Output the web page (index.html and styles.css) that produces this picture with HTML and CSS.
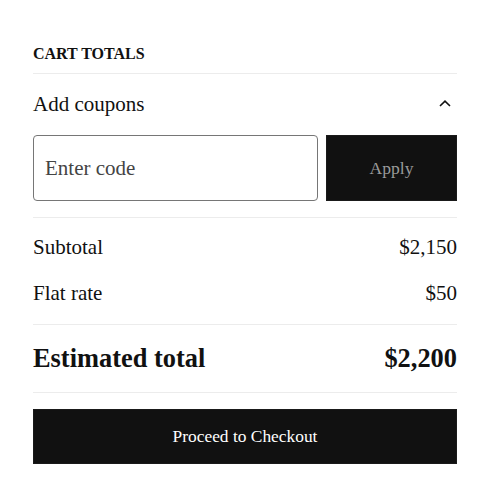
FILE: index.html
```html
<!DOCTYPE html>
<html lang="en">
<head>
<meta charset="utf-8">
<title>Cart totals</title>
<link rel="stylesheet" href="styles.css">
</head>
<body>
<div class="cart">
  <h2 class="cart-title">CART TOTALS</h2>
  <div class="coupons">
    <div class="coupons-head">
      <span>Add coupons</span>
      <svg class="chevron" width="12" height="7" viewBox="0 0 12 7" aria-hidden="true"><polyline points="1,6 6,1.2 11,6" fill="none" stroke="#111" stroke-width="1.6"/></svg>
    </div>
    <div class="coupon-form">
      <input class="coupon-input" type="text" placeholder="Enter code">
      <button class="apply-btn" type="button">Apply</button>
    </div>
  </div>
  <div class="lines">
    <div class="line"><span>Subtotal</span><span>$2,150</span></div>
    <div class="line"><span>Flat rate</span><span>$50</span></div>
  </div>
  <div class="total"><span>Estimated total</span><span>$2,200</span></div>
  <button class="checkout-btn" type="button">Proceed to Checkout</button>
</div>
</body>
</html>
```
FILE: styles.css
```css
html, body {
  margin: 0;
  padding: 0;
  background: #fff;
}
body {
  font-family: "Liberation Serif", "Times New Roman", serif;
  color: #111;
}
.cart {
  width: 424px;
  margin-left: 33px;
  display: flex;
  flex-direction: column;
}
.cart-title {
  margin: 45px 0 0;
  padding-bottom: 10px;
  font-size: 16px;
  line-height: 18px;
  font-weight: bold;
  border-bottom: 1px solid #ececec;
}
.coupons {
  padding: 18px 0 16px;
  border-bottom: 1px solid #ececec;
  display: flex;
  flex-direction: column;
  gap: 18px;
}
.coupons-head {
  display: flex;
  justify-content: space-between;
  align-items: center;
  font-size: 21px;
  line-height: 25px;
}
.chevron {
  margin-right: 6px;
  margin-top: -2px;
}
.coupon-form {
  display: grid;
  grid-template-columns: 285px 1fr;
  column-gap: 8px;
  height: 66px;
}
.coupon-input {
  width: 100%;
  min-width: 0;
  box-sizing: border-box;
  height: 66px;
  margin: 0;
  border: 1px solid #767676;
  border-radius: 4px;
  padding: 0 11px;
  font-family: inherit;
  font-size: 21px;
  color: #111;
  background: #fff;
}
.coupon-input::placeholder {
  color: #444;
  opacity: 1;
}
.apply-btn {
  height: 66px;
  margin: 0;
  border: 1px solid #1a1a1a;
  background: #111;
  color: #9a9a9a;
  font-family: inherit;
  font-size: 17.6px;
  padding: 0;
}
.lines {
  padding: 17px 0 18px;
  border-bottom: 1px solid #ececec;
  display: flex;
  flex-direction: column;
  gap: 21px;
}
.line {
  display: flex;
  justify-content: space-between;
  font-size: 21px;
  line-height: 25px;
}
.total {
  padding: 18px 0;
  border-bottom: 1px solid #ececec;
  display: flex;
  justify-content: space-between;
  font-size: 26.4px;
  line-height: 31px;
  font-weight: bold;
}
.checkout-btn {
  margin-top: 16px;
  height: 55px;
  border: 1px solid #1a1a1a;
  background: #111;
  color: #fff;
  font-family: inherit;
  font-size: 17.4px;
  padding: 0;
}
```
